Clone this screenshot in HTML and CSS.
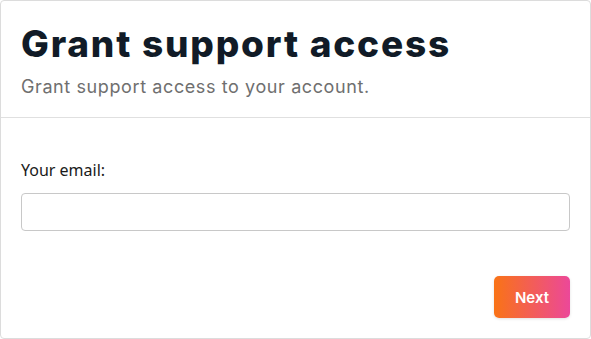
FILE: index.html
```html
<!DOCTYPE html>
<html>
<head>
<meta charset="utf-8">
<link rel="stylesheet" href="styles.css">
</head>
<body>
<div class="card">
  <div class="header">
    <h1 class="title">Grant support access</h1>
    <p class="subtitle">Grant support access to your account.</p>
  </div>
  <div class="body">
    <label class="label" for="email">Your email:</label>
    <input class="input" id="email" type="email">
    <div class="actions">
      <button class="btn">Next</button>
    </div>
  </div>
</div>
</body>
</html>
```
FILE: styles.css
```css
* { box-sizing: border-box; }
html, body { margin: 0; padding: 0; background: #fff; }
body { font-family: Inter, "Noto Sans", sans-serif; }
.card {
  width: 591px;
  height: 339px;
  border: 1px solid #dcdcdc;
  border-radius: 4px;
  display: flex;
  flex-direction: column;
}
.header {
  padding: 20px 20px 0;
  border-bottom: 1px solid #e0e0e0;
  height: 117px;
}
.title {
  margin: 0;
  font-size: 37px;
  line-height: 45px;
  font-weight: 800;
  color: #111b27;
  letter-spacing: 1.8px;
}
.subtitle {
  margin: 8px 0 0;
  font-size: 18px;
  line-height: 26px;
  color: #6f6f6f;
  letter-spacing: 0.6px;
}
.body {
  padding: 42px 20px 0;
  display: flex;
  flex-direction: column;
}
.label {
  font-family: "Noto Sans", sans-serif;
  font-size: 16px;
  line-height: 20px;
  color: #1a1a1a;
  margin-bottom: 13px;
}
.input {
  height: 38px;
  width: 549px;
  border: 1px solid #c8c8c8;
  border-radius: 4px;
  margin: 0;
  padding: 0 10px;
}
.actions {
  display: flex;
  justify-content: flex-end;
  margin-top: 45px;
}
.btn {
  width: 76px;
  height: 42px;
  border: none;
  border-radius: 5px;
  background: linear-gradient(90deg, #f97316, #ec4899);
  color: #fff;
  font-family: Inter, sans-serif;
  font-size: 15px;
  font-weight: 600;
  box-shadow: 0 1px 3px rgba(0,0,0,0.12);
}
```
